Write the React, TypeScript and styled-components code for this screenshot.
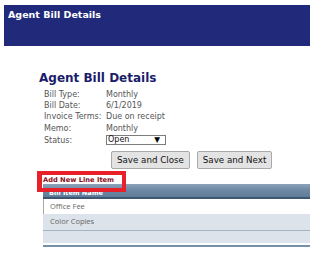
import React from 'react';
import styled, { createGlobalStyle } from 'styled-components';

const GlobalStyle = createGlobalStyle`
  html, body {
    margin: 0;
    padding: 0;
    background: #ffffff;
  }
  body {
    font-family: "DejaVu Sans", Verdana, sans-serif;
  }
`;

const Page = styled.div`
  width: 323px;
  height: 254px;
  overflow: hidden;
`;

const Banner = styled.header`
  margin: 5px 0 0 4px;
  width: 306px;
  height: 41px;
  box-sizing: border-box;
  padding: 4px 0 0 4px;
  background: #212a7a;
  color: #ffffff;
  font: bold 9.5px/12px "DejaVu Sans", sans-serif;
`;

const Content = styled.main`
  padding: 25px 0 0 39px;
`;

const Title = styled.h1`
  margin: 0;
  font: bold 12px/14px "DejaVu Sans", sans-serif;
  color: #1c1c6c;
`;

const Details = styled.dl`
  margin: 4px 0 0 5px;
  display: grid;
  grid-template-columns: 62px auto;
  grid-auto-rows: 11.2px;
  align-items: center;
  font: 8px/11px "DejaVu Sans", sans-serif;
  color: #555555;

  dt, dd {
    margin: 0;
    white-space: nowrap;
  }
`;

const StatusRow = styled.div`
  display: contents;

  dt, dd {
    margin-top: 2px;
  }
`;

const Select = styled.div`
  width: 60px;
  height: 10px;
  box-sizing: border-box;
  border: 1px solid #7d7d7d;
  display: flex;
  align-items: center;
  justify-content: space-between;
  padding: 0 5px 0 1px;
  font: 8px/8px "DejaVu Sans", sans-serif;
  color: #111111;
  background: #ffffff;
`;

const Arrow = styled.span`
  font-size: 7.5px;
  line-height: 8px;
  color: #000000;
`;

const Actions = styled.div`
  display: flex;
  gap: 7px;
  margin: 6px 0 0 72px;
`;

const Button = styled.button`
  height: 18px;
  padding: 0 5px;
  border: 1px solid #a9a9a9;
  border-radius: 2px;
  background: #e3e3e3;
  color: #111111;
  font: 8.7px/1 "DejaVu Sans", sans-serif;
  white-space: nowrap;
`;

const GridArea = styled.section`
  position: relative;
  margin: 7px 0 0 4px;
  width: 267px;
`;

const AddLink = styled.a`
  display: block;
  height: 8px;
  font: bold 6.7px/8px "DejaVu Sans", sans-serif;
  color: #8a0f1c;
  text-decoration: none;
`;

const Highlight = styled.div`
  position: absolute;
  left: -6px;
  top: -5px;
  width: 89px;
  height: 21px;
  box-sizing: border-box;
  border: 4px solid #e8202a;
  border-left-width: 5px;
  pointer-events: none;
`;

const GridHeader = styled.div`
  height: 15px;
  box-sizing: border-box;
  padding: 5px 0 0 6px;
  background: linear-gradient(#8ea3ba 0%, #6d89a5 45%, #5f7c9a 100%);
  border-bottom: 2px solid #3e5673;
  color: #ffffff;
  font: bold 6.5px/8px "DejaVu Sans", sans-serif;
`;

const Row = styled.div<{ $alt?: boolean; $height: number }>`
  height: ${({ $height }) => $height}px;
  box-sizing: border-box;
  display: flex;
  align-items: center;
  padding-left: 6px;
  background: ${({ $alt }) => ($alt ? '#dce3ea' : '#ffffff')};
  border-left: 1px solid ${({ $alt }) => ($alt ? '#dce3ea' : '#a8a8a8')};
  font: 7.5px/1 "Open Sans", sans-serif;
  color: #666666;
`;

const Divider = styled.div<{ $color: string; $size: number }>`
  height: ${({ $size }) => $size}px;
  background: ${({ $color }) => $color};
`;

const Gap = styled.div`
  height: 2px;
`;

const details = [
  ['Bill Type:', 'Monthly'],
  ['Bill Date:', '6/1/2019'],
  ['Invoice Terms:', 'Due on receipt'],
  ['Memo:', 'Monthly'],
];

export default function App() {
  return (
    <Page>
      <GlobalStyle />
      <Banner>Agent Bill Details</Banner>
      <Content>
        <Title>Agent Bill Details</Title>
        <Details>
          {details.map(([label, value]) => (
            <React.Fragment key={label}>
              <dt>{label}</dt>
              <dd>{value}</dd>
            </React.Fragment>
          ))}
          <StatusRow>
            <dt>Status:</dt>
            <dd>
              <Select>
                <span>Open</span>
                <Arrow>▼</Arrow>
              </Select>
            </dd>
          </StatusRow>
        </Details>
        <Actions>
          <Button>Save and Close</Button>
          <Button>Save and Next</Button>
        </Actions>
        <GridArea>
          <AddLink href="#">Add New Line Item</AddLink>
          <GridHeader>Bill Item Name</GridHeader>
          <Row $height={15}>Office Fee</Row>
          <Row $alt $height={16}>Color Copies</Row>
          <Divider $color="#a6b3c3" $size={1} />
          <Row $alt $height={12} />
          <Gap />
          <Divider $color="#7690aa" $size={2} />
          <Highlight />
        </GridArea>
      </Content>
    </Page>
  );
}
